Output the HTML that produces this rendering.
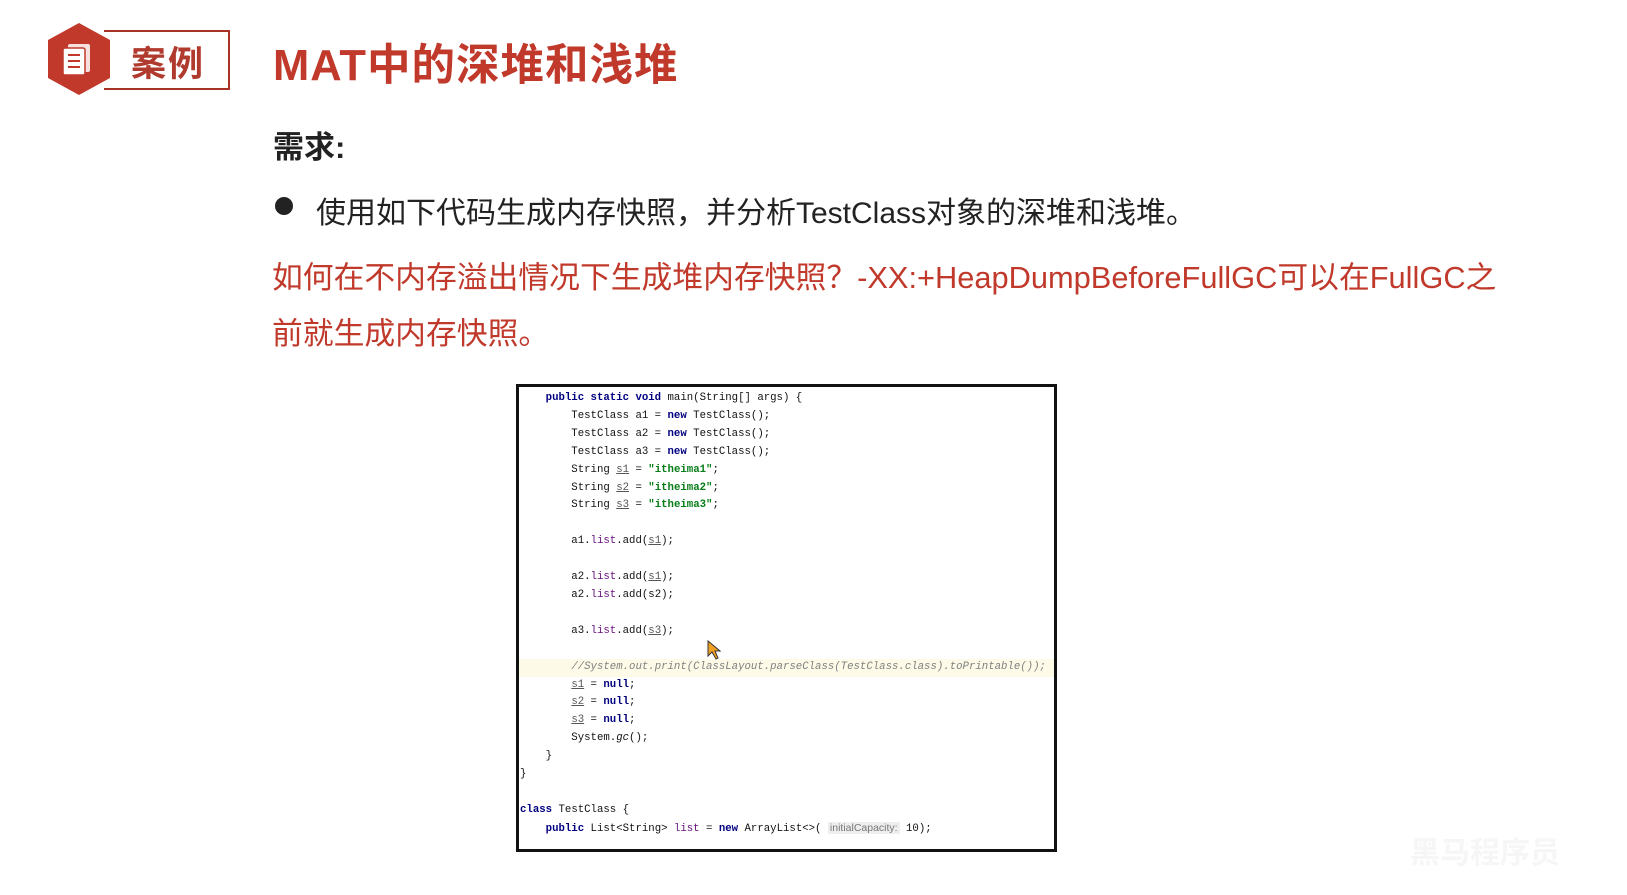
<!DOCTYPE html>
<html><head><meta charset="utf-8"><style>
body{margin:0;width:1627px;height:895px;background:#fff;position:relative;overflow:hidden;font-family:"Liberation Sans","Noto Sans CJK SC",sans-serif}
.abs{position:absolute}
.code{position:absolute;left:516px;top:384px;width:535px;height:462px;border:3px solid #111;overflow:hidden;background:#fff}
.code pre{margin:0;position:absolute;left:1px;top:3px;font-family:"Liberation Mono","DejaVu Sans Mono",monospace;font-size:10.7px;line-height:17.9px;color:#111}
.k{color:#000080;font-weight:bold}
.s{color:#067d17;font-weight:bold}
.f{color:#660e7a}
.u{text-decoration:underline;color:#555}
.c{color:#808080;font-style:italic}
.hint{background:#eee;color:#777;font-family:"Liberation Sans",sans-serif;font-size:10.5px;padding:0 2px}
</style></head><body>
<svg class="abs" style="left:46px;top:22px" width="66" height="74" viewBox="0 0 66 74">
<polygon points="33,1 64,18 64,56 33,73 2,56 2,18" fill="#c0392b"/>
<rect x="22" y="22" width="22" height="28" rx="2" fill="#fff" opacity=".85"/>
<rect x="17" y="26" width="22" height="27" rx="2" fill="#fff" stroke="#c0392b" stroke-width="1.5"/>
<line x1="22" y1="33" x2="34" y2="33" stroke="#c0392b" stroke-width="2"/>
<line x1="22" y1="39" x2="34" y2="39" stroke="#c0392b" stroke-width="2"/>
<line x1="22" y1="45" x2="34" y2="45" stroke="#c0392b" stroke-width="2"/>
</svg>
<div class="abs" style="left:104px;top:30px;width:124px;height:56px;border:2px solid #a93226;border-left:none"></div>
<div class="abs" style="left:131px;top:36px;font-size:35px;font-weight:bold;color:#b03a2e;letter-spacing:2px">案例</div>
<div class="abs" style="left:273px;top:30px;font-size:43.5px;font-weight:bold;color:#c0392b;letter-spacing:1px">MAT中的深堆和浅堆</div>
<div class="abs" style="left:273px;top:122px;font-size:31px;font-weight:bold;color:#222">需求:</div>
<div class="abs" style="left:275px;top:197px;width:18px;height:18px;border-radius:50%;background:#222"></div>
<div class="abs" style="left:316px;top:188px;font-size:30px;color:#222">使用如下代码生成内存快照，并分析TestClass对象的深堆和浅堆。</div>
<div class="abs" style="left:272px;top:250px;font-size:30.8px;color:#c0392b;line-height:56px;width:1340px">如何在不内存溢出情况下生成堆内存快照？-XX:+HeapDumpBeforeFullGC可以在FullGC之<br>前就生成内存快照。</div>
<div class="code">
<div class="abs" style="left:0;top:272px;width:535px;height:18px;background:#fdfbe8"></div>
<pre>    <span class="k">public static void</span> main(String[] args) {
        TestClass a1 = <span class="k">new</span> TestClass();
        TestClass a2 = <span class="k">new</span> TestClass();
        TestClass a3 = <span class="k">new</span> TestClass();
        String <span class="u">s1</span> = <span class="s">"itheima1"</span>;
        String <span class="u">s2</span> = <span class="s">"itheima2"</span>;
        String <span class="u">s3</span> = <span class="s">"itheima3"</span>;

        a1.<span class="f">list</span>.add(<span class="u">s1</span>);

        a2.<span class="f">list</span>.add(<span class="u">s1</span>);
        a2.<span class="f">list</span>.add(s2);

        a3.<span class="f">list</span>.add(<span class="u">s3</span>);

        <span class="c">//System.out.print(ClassLayout.parseClass(TestClass.class).toPrintable());</span>
        <span class="u">s1</span> = <span class="k">null</span>;
        <span class="u">s2</span> = <span class="k">null</span>;
        <span class="u">s3</span> = <span class="k">null</span>;
        System.<i>gc</i>();
    }
}

<span class="k">class</span> TestClass {
    <span class="k">public</span> List&lt;String&gt; <span class="f">list</span> = <span class="k">new</span> ArrayList&lt;&gt;( <span class="hint">initialCapacity:</span> 10);</pre>
</div>
<svg class="abs" style="left:707px;top:640px" width="14" height="20"><polygon points="1,1 1,16 5,12 9,19 11,18 8,11 13,11" fill="#f0a020" stroke="#333" stroke-width="1"/></svg>
<div class="abs" style="left:1410px;top:828px;font-size:30px;color:#f6f6f6;font-weight:bold">黑马程序员</div>
</body></html>
